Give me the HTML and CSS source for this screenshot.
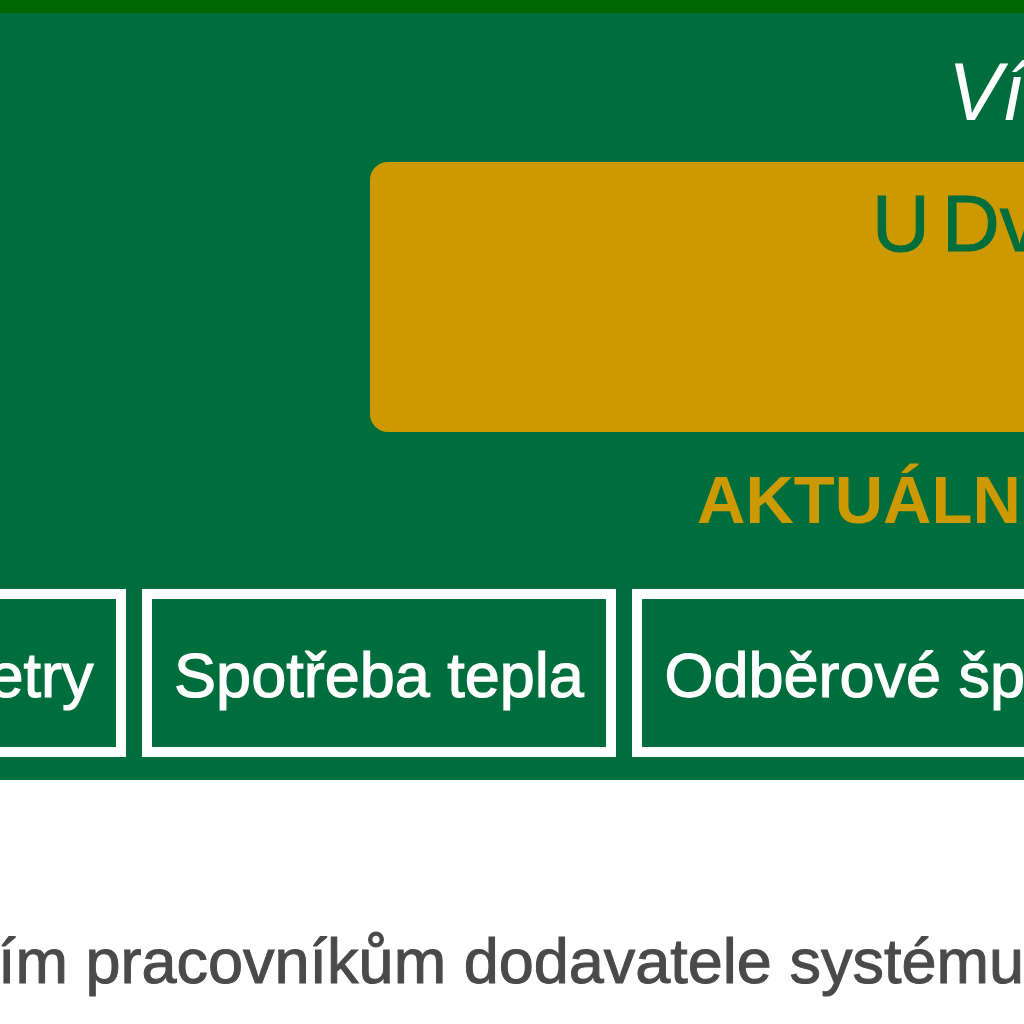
FILE: index.html
```html
<!DOCTYPE html>
<html lang="cs">
<head>
<meta charset="utf-8">
<title>Spotřeba tepla</title>
<link rel="stylesheet" href="styles.css">
</head>
<body>
<div class="topbar"></div>
<header class="hero">
  <div class="welcome">Vítejte</div>
  <div class="site"><span class="site-name">U Dvora</span></div>
  <div class="status">AKTUÁLNÍ</div>
  <nav class="tabs">
    <a class="tab">Parametry</a>
    <a class="tab">Spotřeba tepla</a>
    <a class="tab">Odběrové špičky</a>
  </nav>
</header>
<main class="content">
  <p class="note">ím pracovníkům dodavatele systému</p>
</main>
</body>
</html>
```

FILE: styles.css
```css
html, body {
  margin: 0;
  padding: 0;
  overflow: hidden;
  background: #ffffff;
  font-family: "Liberation Sans", Arial, sans-serif;
}

.topbar {
  height: 13px;
  background: #006600;
}

.hero {
  background: #006e3c;
  padding: 34px 0 23px 0;
}

.welcome {
  margin-left: 948px;
  font-size: 81px;
  line-height: 90px;
  font-style: italic;
  color: #ffffff;
  white-space: nowrap;
}

.site {
  margin: 25px -120px 0 370px;
  height: 270px;
  box-sizing: border-box;
  padding: 17px 0 0 502px;
  background: #cc9900;
  border-radius: 18px;
  white-space: nowrap;
}

.site-name {
  font-size: 80px;
  line-height: 90px;
  color: #006e3c;
  word-spacing: -10px;
  -webkit-text-stroke: 1px #006e3c;
}

.status {
  margin: 28px 0 0 697px;
  font-size: 67px;
  line-height: 80px;
  font-weight: bold;
  color: #cc9900;
  white-space: nowrap;
}

.tabs {
  display: flex;
  gap: 16.5px;
  margin: 49px 0 0 -229px;
  white-space: nowrap;
}

.tab {
  flex: none;
  border: 10px solid #ffffff;
  padding: 40px 22px 36px 22px;
  font-size: 63px;
  line-height: 72px;
  color: #ffffff;
  -webkit-text-stroke: 1.2px #ffffff;
}

.content {
  padding: 0;
}

.note {
  margin: 145px 0 0 -2px;
  font-size: 63px;
  line-height: 72px;
  color: #4a4a4a;
  white-space: nowrap;
  -webkit-text-stroke: 1px #4a4a4a;
}
```
